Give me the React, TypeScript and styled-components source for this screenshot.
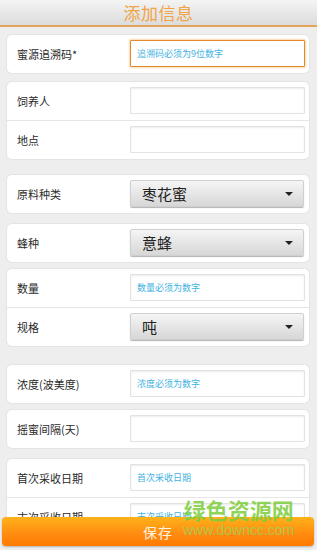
import React from "react";
import styled, { createGlobalStyle } from "styled-components";

const Global = createGlobalStyle`
  html, body { margin: 0; padding: 0; height: 550px; overflow: hidden; }
  body { background: #eeeeee; font-family: Roboto, "Noto Sans CJK SC", sans-serif; }
`;

const Page = styled.div`
  position: relative;
  width: 317px;
  height: 550px;
  overflow: hidden;
  background: #eeeeee;
`;

const Header = styled.div`
  height: 25px;
  background: linear-gradient(#f4f4f4, #dcdcdc);
  border-bottom: 2px solid #e3a45c;
  display: flex;
  align-items: center;
  justify-content: center;
  color: #f0a445;
  font-size: 17px;
  font-family: "Noto Sans CJK SC", sans-serif;
  letter-spacing: 0.5px;
`;

const Form = styled.div`
  display: flex;
  flex-direction: column;
  padding: 0 8px 0 7px;
`;

const Card = styled.div<{ $mt: number }>`
  margin-top: ${(p) => p.$mt}px;
  background: #ffffff;
  border-radius: 5px;
  box-shadow: 0 0 0 1px #e4e4e4;
  display: flex;
  flex-direction: column;
`;

const Row = styled.div`
  height: 37px;
  display: flex;
  align-items: center;
  padding: 0 4px 1px 10px;
  & + & {
    border-top: 1px solid #e6e6e6;
  }
`;

const Label = styled.div`
  width: 113px;
  font-size: 11px;
  color: #2a2a2a;
  font-family: "Noto Sans CJK SC", sans-serif;
`;

const Input = styled.div<{ $focus?: boolean }>`
  flex: 1;
  height: 27px;
  box-sizing: border-box;
  background: #fff;
  border: 1px solid ${(p) => (p.$focus ? "#e38a2c" : "#e2e2e2")};
  box-shadow: ${(p) =>
    p.$focus
      ? "0 0 2px 1px rgba(240,170,80,0.45)"
      : "inset 0 1px 2px rgba(0,0,0,0.08)"};
  border-radius: 1px;
  display: flex;
  align-items: center;
  padding-left: 6px;
  font-size: 9px;
  color: #3fb2e2;
  font-family: "Noto Sans CJK SC", sans-serif;
`;

const Select = styled.div`
  flex: 1;
  margin-right: 1px;
  height: 27px;
  box-sizing: border-box;
  background: linear-gradient(#f5f5f5, #d7d7d7);
  border: 1px solid #cfcfcf;
  box-shadow: 0 1px 1px rgba(0, 0, 0, 0.3);
  border-radius: 2px;
  display: flex;
  align-items: center;
  justify-content: space-between;
  padding: 0 10px 0 11px;
  font-size: 15px;
  color: #222;
  font-family: "Noto Sans CJK SC", sans-serif;
`;

const Arrow = styled.span`
  width: 0;
  height: 0;
  border-left: 4px solid transparent;
  border-right: 4px solid transparent;
  border-top: 4px solid #222;
`;

const SaveButton = styled.div`
  position: absolute;
  left: 2px;
  right: 3px;
  top: 517px;
  height: 29px;
  border-radius: 4px;
  background: linear-gradient(#ffb21a, #ff8a10 60%, #ff7a00);
  box-shadow: 0 1px 2px rgba(0, 0, 0, 0.25);
  display: flex;
  align-items: center;
  justify-content: center;
  color: #fff3e0;
  font-size: 14px;
  letter-spacing: 1px;
  font-family: "Noto Sans CJK SC", sans-serif;
`;

const Watermark = styled.div`
  position: absolute;
  left: 183px;
  top: 496px;
  display: flex;
  flex-direction: column;
  align-items: center;
  pointer-events: none;
`;

const WmTitle = styled.div`
  font-size: 22px;
  font-weight: bold;
  color: rgba(125, 205, 60, 0.85);
  font-family: "Noto Sans CJK SC", sans-serif;
  line-height: 26px;
`;

const WmUrl = styled.div`
  font-size: 14px;
  color: rgba(150, 215, 90, 0.75);
  font-family: "Liberation Sans", sans-serif;
  line-height: 16px;
`;

type Field =
  | { label: string; kind: "input"; placeholder?: string; focus?: boolean }
  | { label: string; kind: "select"; value: string };

const cards: { mt: number; fields: Field[] }[] = [
  { mt: 8, fields: [{ label: "蜜源追溯码*", kind: "input", placeholder: "追溯码必须为9位数字", focus: true }] },
  { mt: 9, fields: [{ label: "饲养人", kind: "input" }, { label: "地点", kind: "input" }] },
  { mt: 16, fields: [{ label: "原料种类", kind: "select", value: "枣花蜜" }] },
  { mt: 11, fields: [{ label: "蜂种", kind: "select", value: "意蜂" }] },
  {
    mt: 7,
    fields: [
      { label: "数量", kind: "input", placeholder: "数量必须为数字" },
      { label: "规格", kind: "select", value: "吨" },
    ],
  },
  { mt: 19, fields: [{ label: "浓度(波美度)", kind: "input", placeholder: "浓度必须为数字" }] },
  { mt: 7, fields: [{ label: "摇蜜间隔(天)", kind: "input" }] },
  {
    mt: 11,
    fields: [
      { label: "首次采收日期", kind: "input", placeholder: "首次采收日期" },
      { label: "末次采收日期", kind: "input", placeholder: "末次采收日期" },
    ],
  },
];

export default function App() {
  return (
    <Page>
      <Global />
      <Header>添加信息</Header>
      <Form>
        {cards.map((c, i) => (
          <Card key={i} $mt={c.mt}>
            {c.fields.map((f, j) => (
              <Row key={j}>
                <Label>{f.label}</Label>
                {f.kind === "input" ? (
                  <Input $focus={f.focus}>{f.placeholder}</Input>
                ) : (
                  <Select>
                    <span>{f.value}</span>
                    <Arrow />
                  </Select>
                )}
              </Row>
            ))}
          </Card>
        ))}
      </Form>
      <SaveButton>保存</SaveButton>
      <Watermark>
        <WmTitle>绿色资源网</WmTitle>
        <WmUrl>www.downcc.com</WmUrl>
      </Watermark>
    </Page>
  );
}
